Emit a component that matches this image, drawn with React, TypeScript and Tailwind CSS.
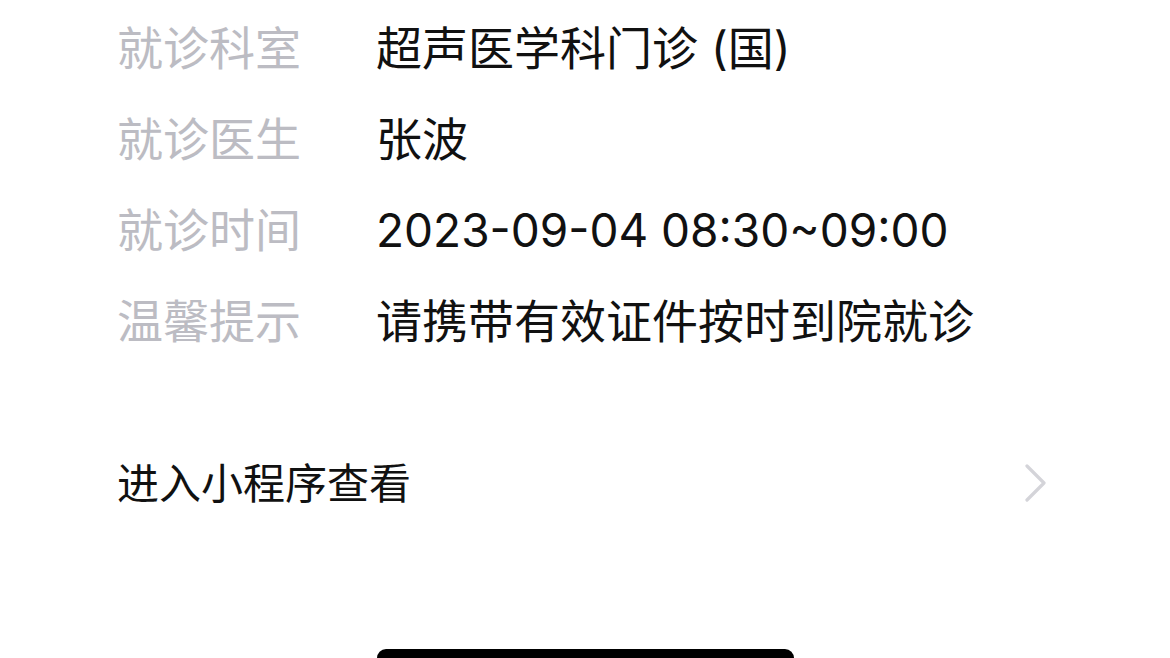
import React from "react";

const rows = [
  { label: "就诊科室", value: "超声医学科门诊 (国)" },
  { label: "就诊医生", value: "张波" },
  { label: "就诊时间", value: "2023-09-04 08:30~09:00" },
  { label: "温馨提示", value: "请携带有效证件按时到院就诊" },
];

export default function App() {
  return (
    <div
      className="w-[1170px] h-[658px] bg-white overflow-hidden flex flex-col"
      style={{ fontFamily: 'Inter, "Noto Sans CJK SC", sans-serif' }}
    >
      <div className="flex flex-col pt-[3px] pl-[117px]">
        {rows.map((row) => (
          <div key={row.label} className="flex items-center h-[91px] text-[46px]">
            <span className="w-[259px] shrink-0 text-[#bcbcc3]">{row.label}</span>
            <span className="text-[#111111]">{row.value}</span>
          </div>
        ))}
      </div>

      <div className="flex items-center justify-between mt-[51px] h-[130px] pl-[117px] pr-[122px]">
        <span className="text-[42px] text-[#111111]">进入小程序查看</span>
        <svg width="24" height="38" viewBox="0 0 24 38" fill="none">
          <polyline
            points="3,2 20,19 3,36"
            stroke="#d4d4d9"
            strokeWidth="3.2"
            strokeLinecap="round"
            strokeLinejoin="round"
          />
        </svg>
      </div>

      <div className="flex-1 flex justify-center items-end">
        <div className="w-[417px] h-[9px] bg-black rounded-t-[10px]" />
      </div>
    </div>
  );
}
